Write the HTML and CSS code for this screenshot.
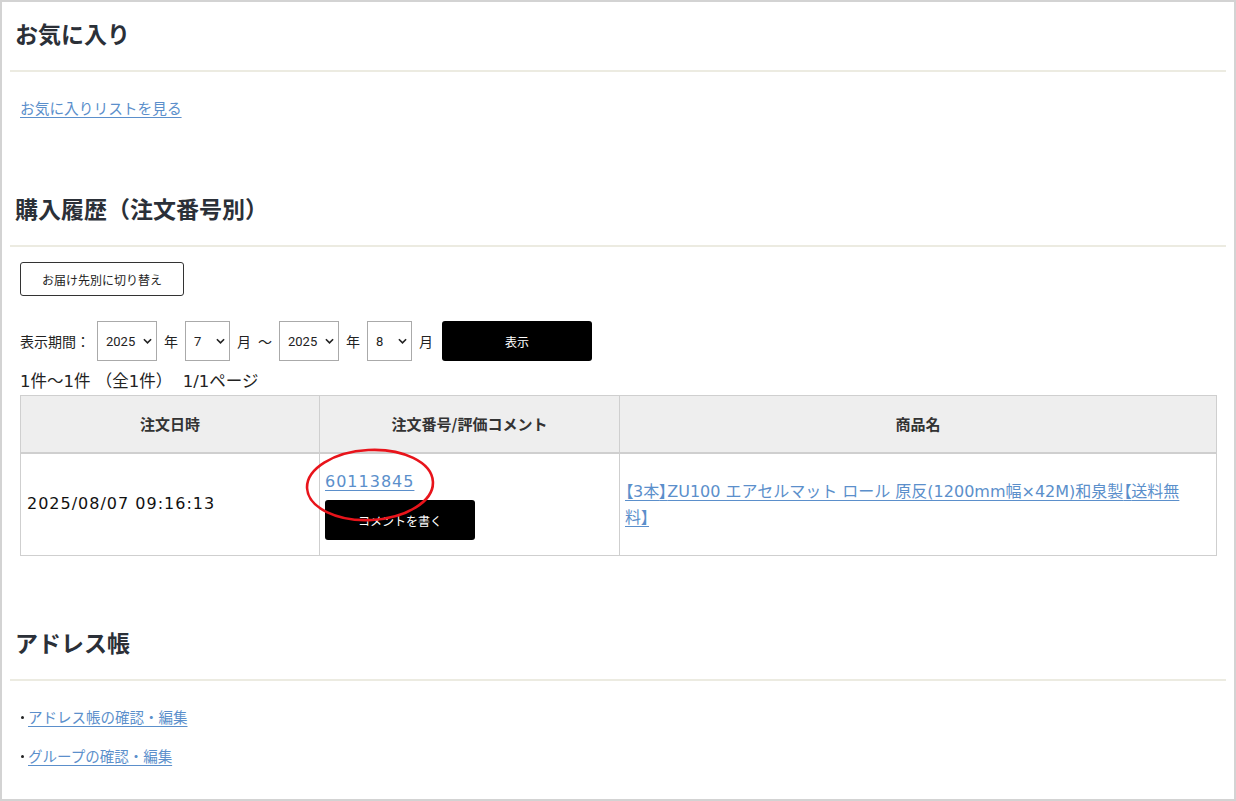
FILE: index.html
```html
<!DOCTYPE html>
<html lang="ja">
<head>
<meta charset="utf-8">
<title>マイページ</title>
<link rel="stylesheet" href="styles.css">
</head>
<body>
<div class="page">
  <section class="sec sec-fav">
    <h2 class="sec-title">お気に入り</h2>
    <div class="sec-body">
      <a class="link" href="#">お気に入りリストを見る</a>
    </div>
  </section>

  <section class="sec sec-history">
    <h2 class="sec-title">購入履歴（注文番号別）</h2>
    <div class="sec-body">
      <button class="btn-outline" type="button">お届け先別に切り替え</button>
      <div class="period">
        <span class="lbl">表示期間：</span>
        <span class="sel sel-year"><select><option>2025</option></select><svg class="chev" viewBox="0 0 10 6"><path d="M1 1l4 4 4-4" fill="none" stroke="#222" stroke-width="1.8"/></svg></span>
        <span class="lbl">年</span>
        <span class="sel sel-mon"><select><option>7</option></select><svg class="chev" viewBox="0 0 10 6"><path d="M1 1l4 4 4-4" fill="none" stroke="#222" stroke-width="1.8"/></svg></span>
        <span class="lbl">月</span>
        <span class="lbl">〜</span>
        <span class="sel sel-year"><select><option>2025</option></select><svg class="chev" viewBox="0 0 10 6"><path d="M1 1l4 4 4-4" fill="none" stroke="#222" stroke-width="1.8"/></svg></span>
        <span class="lbl">年</span>
        <span class="sel sel-mon"><select><option>8</option></select><svg class="chev" viewBox="0 0 10 6"><path d="M1 1l4 4 4-4" fill="none" stroke="#222" stroke-width="1.8"/></svg></span>
        <span class="lbl">月</span>
        <button class="btn-black btn-show" type="button">表示</button>
      </div>
      <p class="count">1件〜1件 （全1件）&nbsp;&nbsp;1/1ページ</p>
      <table class="orders">
        <thead>
          <tr>
            <th class="c-date">注文日時</th>
            <th class="c-no">注文番号/評価コメント</th>
            <th class="c-name">商品名</th>
          </tr>
        </thead>
        <tbody>
          <tr>
            <td class="c-date">2025/08/07 09:16:13</td>
            <td class="c-no">
              <div class="no-wrap">
                <a class="link order-no" href="#">60113845</a>
                <svg class="circle" viewBox="0 0 132 76"><ellipse cx="66" cy="38" rx="63" ry="35" fill="none" stroke="#e8141b" stroke-width="2.6" transform="rotate(-3 66 38)"/></svg>
              </div>
              <button class="btn-black btn-comment" type="button">コメントを書く</button>
            </td>
            <td class="c-name"><a class="link prod" href="#"><span class="bk">【</span>3本<span class="bk">】</span>ZU100 エアセルマット ロール 原反(1200mm幅×42M)和泉製<span class="bk">【</span>送料無<wbr>料<span class="bk">】</span></a></td>
          </tr>
        </tbody>
      </table>
    </div>
  </section>

  <section class="sec sec-addr">
    <h2 class="sec-title">アドレス帳</h2>
    <div class="sec-body">
      <ul class="addr-list">
        <li><a class="link" href="#">アドレス帳の確認・編集</a></li>
        <li><a class="link" href="#">グループの確認・編集</a></li>
      </ul>
    </div>
  </section>
</div>
</body>
</html>
```

FILE: styles.css
```css
* { box-sizing: border-box; }
html, body {
  margin: 0;
  padding: 0;
  background: #fff;
}
body {
  font-family: "Noto Sans CJK JP", "Noto Sans", sans-serif;
  color: #222;
  font-size: 14px;
}
.page {
  width: 1236px;
  height: 801px;
  border: 2px solid #d3d3d3;
  padding: 0 8px;
  overflow: hidden;
}
.sec-title {
  margin: 0;
  padding: 15px 6px 21px 5px;
  font-size: 23px;
  line-height: 32px;
  font-weight: 700;
  color: #2b3038;
  border-bottom: 2px solid #ecebe1;
}
.sec-body {
  padding: 0 10px;
}
.link {
  color: #5b8fcb;
  text-decoration: underline;
  text-underline-offset: 3px;
}
.sec-fav .sec-body {
  padding-top: 26px;
  font-size: 14.7px;
  line-height: 20px;
}
.sec-history {
  margin-top: 59px;
}
.btn-outline {
  display: block;
  margin-top: 15px;
  width: 164px;
  height: 34px;
  background: #fff;
  border: 1px solid #333;
  border-radius: 3px;
  font-family: "Noto Sans CJK JP", sans-serif;
  font-size: 12px;
  color: #222;
  padding: 0;
}
.period {
  display: flex;
  align-items: center;
  gap: 7px;
  margin-top: 25px;
  height: 40px;
}
.lbl {
  font-size: 14px;
  color: #222;
}
.sel {
  position: relative;
  display: block;
  height: 40px;
}
.sel select {
  appearance: none;
  -webkit-appearance: none;
  height: 40px;
  border: 1px solid #aaa;
  border-radius: 0;
  background: #fff;
  font-family: "Roboto", "Liberation Sans", sans-serif;
  font-size: 13px;
  color: #222;
  padding: 0 0 0 8px;
  margin: 0;
}
.sel-year select { width: 60px; }
.sel-mon select { width: 45px; }
.chev {
  position: absolute;
  right: 5px;
  top: 17px;
  width: 9px;
  height: 6px;
  pointer-events: none;
}
.btn-black {
  background: #000;
  color: #fff;
  border: 0;
  border-radius: 3px;
  font-family: "Noto Sans CJK JP", sans-serif;
  font-size: 12px;
  padding: 0;
  width: 150px;
  height: 40px;
}
.btn-show {
  margin-left: 2px;
}
.count {
  margin: 11px 0 3px;
  font-family: "DejaVu Sans", "Noto Sans CJK JP", sans-serif;
  font-size: 16.5px;
  line-height: 20px;
  color: #222;
}
.orders {
  width: 1197px;
  border-collapse: collapse;
  table-layout: fixed;
}
.orders th, .orders td {
  border: 1px solid #cfcfcf;
}
.orders th {
  background: #eee;
  height: 57px;
  font-size: 15px;
  font-weight: 700;
  color: #333;
  border-bottom: 2px solid #cfcfcf;
  text-align: center;
}
.orders th.c-date, .orders td.c-date { width: 299px; }
.orders th.c-no, .orders td.c-no { width: 300px; }
.orders td {
  height: 103px;
  vertical-align: middle;
  font-size: 16px;
  line-height: 24px;
}
.orders td.c-date {
  padding: 0 6px;
  color: #111;
  font-family: "DejaVu Sans", sans-serif;
  letter-spacing: 1px;
}
.orders td.c-no {
  padding: 0 5px;
}
.no-wrap {
  position: relative;
  height: 24px;
}
.order-no {
  font-family: "DejaVu Sans", sans-serif;
  letter-spacing: 1px;
}
.circle {
  position: absolute;
  left: -21px;
  top: -21px;
  width: 132px;
  height: 76px;
  pointer-events: none;
}
.btn-comment {
  display: block;
  margin-top: 8px;
}
.orders td.c-name {
  padding: 0 28px 0 5px;
}
.prod {
  font-family: "DejaVu Sans", "Noto Sans CJK JP", sans-serif;
  font-size: 16px;
  line-height: 24px;
}
.bk {
  font-family: "Noto Sans CJK JP", sans-serif;
  font-feature-settings: "palt";
}
.sec-addr {
  margin-top: 55px;
}
.addr-list {
  list-style: none;
  margin: 0;
  padding: 26px 0 0 1px;
  font-size: 14.5px;
  line-height: 20px;
}
.addr-list li {
  margin-bottom: 19px;
  display: flex;
  align-items: center;
}
.addr-list li::before {
  content: "";
  display: block;
  width: 3px;
  height: 3px;
  border-radius: 50%;
  background: #222;
  margin-right: 4px;
}
```
